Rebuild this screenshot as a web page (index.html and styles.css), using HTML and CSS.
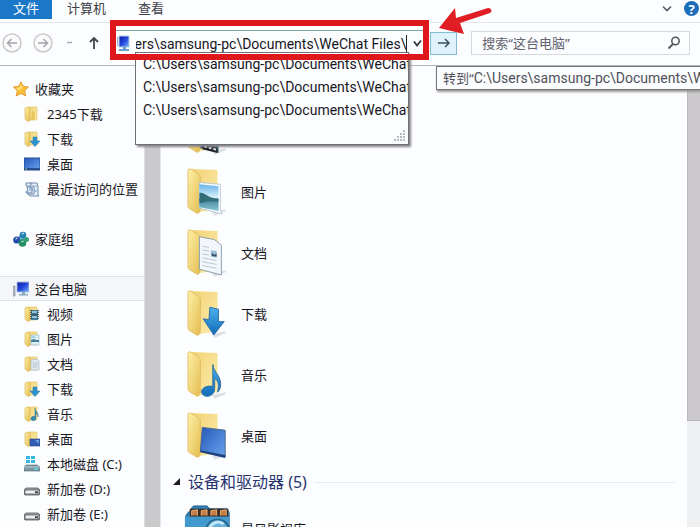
FILE: index.html
```html
<!DOCTYPE html>
<html lang="zh-CN">
<head>
<meta charset="utf-8">
<meta name="viewport" content="width=device-width, initial-scale=1">
<title>这台电脑</title>
<link rel="stylesheet" href="styles.css">
</head>
<body>
<svg class="sprite" aria-hidden="true">
  <defs>
    <linearGradient id="gold" x1="0" y1="0" x2="1" y2="1"><stop offset="0" stop-color="#fff0a8"/><stop offset="1" stop-color="#e3bd50"/></linearGradient>
    <linearGradient id="goldback" x1="0" y1="0" x2="1" y2="1"><stop offset="0" stop-color="#f2d375"/><stop offset="1" stop-color="#fbecac"/></linearGradient>
    <linearGradient id="blue" x1="0" y1="0" x2="1" y2="1"><stop offset="0" stop-color="#2458b8"/><stop offset="1" stop-color="#6ba4ee"/></linearGradient>
    <linearGradient id="arrowblue" x1="0" y1="0" x2="0" y2="1"><stop offset="0" stop-color="#4db0ec"/><stop offset="1" stop-color="#116bb8"/></linearGradient>
    <linearGradient id="sky" x1="0" y1="0" x2="0" y2="1"><stop offset="0" stop-color="#68b4e8"/><stop offset=".5" stop-color="#dcf1fa"/><stop offset=".55" stop-color="#44849a"/><stop offset="1" stop-color="#88c5d4"/></linearGradient>
    <linearGradient id="screen" x1="0" y1="0" x2="1" y2="1"><stop offset="0" stop-color="#0b18a0"/><stop offset=".5" stop-color="#2447dc"/><stop offset="1" stop-color="#7bb4fa"/></linearGradient>
  </defs>
  <symbol id="folder" viewBox="0 0 16 16">
    <path d="M4 1h9v13H4z" fill="url(#goldback)" stroke="#dfc067" stroke-width=".6"/>
    <path d="M1 2l2-1 3 1.500v12L4 15.500 1 13z" fill="url(#gold)" stroke="#d5b14c" stroke-width=".6"/>
  </symbol>
  <symbol id="s-folder" viewBox="0 0 16 16">
    <use href="#folder"/><path d="M8 4l3 3v7H7z" fill="#e8c75e"/>
  </symbol>
  <symbol id="s-download" viewBox="0 0 16 16">
    <use href="#folder"/><path d="M9 6h4v4h3l-5 5.500L6 10h3z" fill="#2e93cd" stroke="#2576a8" stroke-width=".5"/>
  </symbol>
  <symbol id="s-desktop" viewBox="0 0 16 16">
    <path d="M0 2h16v12H0z" fill="url(#blue)" stroke="#244c91"/><path d="M0 13h16" stroke="#1d3c78" stroke-width="1.500"/><path d="M1 13h2" stroke="#8bd0a0"/>
  </symbol>
  <symbol id="s-video" viewBox="0 0 16 16">
    <use href="#folder"/><path d="M7 4h7v10H7z" fill="#3c7d9d"/><path d="M7 4v10M14 4v10" stroke="#33414c" stroke-width="1.500" stroke-dasharray="1 1"/><path d="M8 6h5M8 11h5" stroke="#b8dae1" stroke-width="1.500"/><path d="M8 9h5" stroke="#23404e"/>
  </symbol>
  <symbol id="s-picture" viewBox="0 0 16 16">
    <use href="#folder"/><path d="M7 4h8v10H7z" fill="#d8eef6" stroke="#91b6c9" stroke-width=".6"/><path d="M7 9l3-1 2 1h3v2H7z" fill="#477c91"/><path d="M8 6h3" stroke="#6aadd5"/>
  </symbol>
  <symbol id="s-document" viewBox="0 0 16 16">
    <use href="#folder"/><path d="M7 4l6-1 2 2v9H7z" fill="#e4ebf0" stroke="#a2b2bd" stroke-width=".7"/><path d="M8.500 7h5M8.500 9h5M8.500 11h5" stroke="#9cb2c3" stroke-width=".7"/>
  </symbol>
  <symbol id="s-music" viewBox="0 0 16 16">
    <use href="#folder"/><path d="M11 2c0 4 4 4 3 9 0-3-1-4-2-4v5c0 4-6 3-5 0 1-2 3-2 4-1z" fill="#318fb5" stroke="#25617b" stroke-width=".4"/>
  </symbol>
  <symbol id="s-folderdesk" viewBox="0 0 16 16">
    <use href="#folder"/><path d="M6 8h10v7H6z" fill="#315fb5" stroke="#284180" stroke-width=".6"/><path d="M11 9h4v4" fill="#6e9ce0"/>
  </symbol>
  <symbol id="s-star" viewBox="0 0 16 16">
    <path d="M8 .8l2.300 4.500 5.200.7-3.800 3.700 1 5.300L8 12.500 3.300 15l1-5.300L.5 6l5.200-.7z" fill="#fdc034" stroke="#d68b20" stroke-width=".8"/><path d="M8 3l1.500 3.500L6 9 3 7l3.500-.6z" fill="#ffe47c"/>
  </symbol>
  <symbol id="s-recent" viewBox="0 0 16 16">
    <path d="M2 2h5v3H2zM6 2h7l1 3v9l1 1H6l-2-2h6V5H8M3 6h5v6H4z" fill="#e3effa" stroke="#738ba9"/><path d="M5 7h4M5 9h4M10 10h3M11 5h2" stroke="#6a9ac6"/><path d="M1 11l3-2v5z" fill="#7ba4cb"/>
  </symbol>
  <symbol id="s-home" viewBox="0 0 16 16">
    <path d="M8 4l4 5-8 2zM10 4l-1 9" stroke="#4d9ec6" stroke-width="2" fill="#9fd8df"/><circle cx="10" cy="4" r="3.300" fill="#247fb5"/><circle cx="3.800" cy="9" r="3.600" fill="#264aa8"/><circle cx="9.500" cy="12" r="3.800" fill="#258f61"/><circle cx="13.500" cy="8.500" r="2.500" fill="#359f73"/><path d="M9 3l2-1M2.500 8l2-1M8.500 11l2-1" stroke="#c9ecf2" stroke-width="1.300"/>
  </symbol>
  <symbol id="s-pc" viewBox="0 0 16 16">
    <path d="M0 5h2v10H0z" fill="#bac7cf" stroke="#73818d" stroke-width=".6"/><path d="M4 1h12v10H4z" fill="url(#screen)" stroke="#a1bddb"/><path d="M9 11h3v2h3v1.500H6V13h3z" fill="#8aa9bd"/>
  </symbol>
  <symbol id="s-system" viewBox="0 0 16 16">
    <path d="M2 0h4v3H2zM7 0h4v3H7zM2 4h4v3H2zM7 4h4v3H7z" fill="#35b7e4"/><path d="M2 9h11l3 2v4H0v-4z" fill="#7c97a2" stroke="#4c6774" stroke-width=".6"/><path d="M0 11h16" stroke="#bdd0d6"/><path d="M10 13h4" stroke="#63d2e2" stroke-width="1.500"/>
  </symbol>
  <symbol id="s-drive" viewBox="0 0 16 16">
    <path d="M2 7h12l2 2v4l-1 1H1l-1-1V9z" fill="#a3a6aa" stroke="#55585e" stroke-width=".8"/><path d="M1 9h14v4H1z" fill="#eef0f2" stroke="#54575d" stroke-width=".8"/><path d="M11 11.200h3" stroke="#40444a" stroke-width="1.800"/>
  </symbol>
  <symbol id="bigfolder" viewBox="0 0 44 52">
    <path d="M26 47l14-3 1 2-12 5z" fill="#c6cbd1" opacity=".6"/>
    <path d="M4 2l28 1v41l-18 3z" fill="url(#goldback)"/>
    <path d="M1 4c0-2 1-3 3-2l8 5c1 1 2 2 2 4v32c0 4-2 6-4 5l-8-5c-1-1-1-2-1-4z" fill="url(#gold)" stroke="#dab85c" stroke-width=".8"/>
  </symbol>
  <symbol id="b-video" viewBox="0 0 44 52">
    <use href="#bigfolder"/><path d="M14 15l19 3v31l-19-5z" fill="#2d6279"/><path d="M16 40l16 4v5l-16-4z" fill="#23272d"/><path d="M18 42l14 4" stroke="#e6e6e5" stroke-width="2" stroke-dasharray="3 2"/>
  </symbol>
  <symbol id="b-picture" viewBox="0 0 44 52">
    <use href="#bigfolder"/><path d="M13 16l22 2v27l2 4-24-6z" fill="#f8fcfe" stroke="#a5bed0" stroke-width=".8"/><path d="M13 18l20 2v26l-20-4z" fill="url(#sky)"/><path d="M13 27c5-2 9 6 20 6v3c-8-1-13 0-20 2z" fill="#326e78"/>
  </symbol>
  <symbol id="b-document" viewBox="0 0 44 52">
    <use href="#bigfolder"/><path d="M13 9l16 3 7 6v31l-23-6z" fill="#f3f6fa" stroke="#879db0"/><path d="M16 19l7 1M16 23l7 1M16 27l7 1M16 31l15 3M16 35l15 3M16 39l15 3" stroke="#b6c4d7"/><path d="M25 23l6 1v7l-6-1z" fill="#9dbfd7"/><path d="M26 26l3 2 2-2v4l-5-1z" fill="#334e65"/>
  </symbol>
  <symbol id="b-download" viewBox="0 0 44 52">
    <use href="#bigfolder"/><path d="M24 19l9 2v13l6 0-11 14-11-17 6 1z" fill="url(#arrowblue)" stroke="#2b70a6"/>
  </symbol>
  <symbol id="b-music" viewBox="0 0 44 52">
    <use href="#bigfolder"/><path d="M27 15c1 9 10 12 8 24-1 3-2 4-3 5 2-9 0-13-3-14v10c0 8-8 10-12 7-5-5 2-11 10-9z" fill="url(#arrowblue)" stroke="#2e6e9e"/>
  </symbol>
  <symbol id="b-desktop" viewBox="0 0 44 52">
    <use href="#bigfolder"/><path d="M16 17l24 3v28L14 42z" fill="url(#blue)" stroke="#48648d"/><path d="M14 41l26 5v3l-26-6z" fill="#1f427e"/>
  </symbol>
  <symbol id="b-media" viewBox="0 0 50 52">
    <path d="M2 12l3-4h3V4l2-2h14l3 3h18l2 4v43H1z" fill="#2c83ba" stroke="#225f89"/><path d="M6 5h40v9H6z" fill="#392b25"/><path d="M8 12V7l6-1v6M18 12V7l6-1v6M28 12V7l6-1v6M38 12V7l6-1v6" fill="#c47d48" stroke="#e8b174"/><path d="M1 13h46v39H1z" fill="#4299cd"/><circle cx="35" cy="28" r="12" fill="#68b2d9" stroke="#266991" stroke-width="2"/><path d="M27 24c3-5 10-7 14-3" fill="none" stroke="#c3e7f6" stroke-width="3"/>
  </symbol>
</svg>

<header class="ribbon">
  <button class="tab tab-file">文件</button>
  <button class="tab">计算机</button>
  <button class="tab">查看</button>
  <span class="spacer"></span>
  <button class="expand" aria-label="展开功能区"><svg width="10" height="8" viewBox="0 0 10 8"><path d="M1 1.500l4 4 4-4" fill="none" stroke="#555b66" stroke-width="1.600"/></svg></button>
  <button class="help" aria-label="帮助">?</button>
</header>

<div class="toolbar">
  <div class="history">
    <button aria-label="后退"><svg width="22" height="22" viewBox="0 0 22 22"><circle cx="11" cy="11" r="9" fill="#fbfbfc" stroke="#c9cace" stroke-width="1.500"/><path d="M16 11H7M10.500 7l-4 4 4 4" fill="none" stroke="#a3a5aa" stroke-width="1.500"/></svg></button>
    <button aria-label="前进"><svg width="22" height="22" viewBox="0 0 22 22"><circle cx="11" cy="11" r="9" fill="#fbfbfc" stroke="#c9cace" stroke-width="1.500"/><path d="M6 11h9M11.500 7l4 4-4 4" fill="none" stroke="#a3a5aa" stroke-width="1.500"/></svg></button>
  </div>
  <button class="recent" aria-label="最近浏览"><svg width="22" height="22" viewBox="0 0 22 22"><path d="M9 10.500h5" stroke="#aaacb2" stroke-width="1.500"/></svg></button>
  <button class="up" aria-label="向上"><svg width="20" height="22" viewBox="0 0 20 22"><path d="M10 17V6M6 10l4-4 4 4" fill="none" stroke="#44464e" stroke-width="1.800"/></svg></button>
  <div class="address">
    <div class="address-field">
      <svg width="18" height="18" viewBox="0 0 18 18"><path d="M1 2h1v9H1z" fill="#9eafc0"/><path d="M3 1h10v11H3z" fill="url(#screen)" stroke="#b0cdea"/><path d="M7 12h3v2h3v2H3v-2h4z" fill="#6b9fc9"/></svg>
      <input id="path" class="path" type="text" aria-label="地址" value="C:\Users\samsung-pc\Documents\WeChat Files\">
      <span class="caret"></span>
      <button class="drop" aria-label="显示历史记录"><svg width="10" height="10" viewBox="0 0 10 10"><path d="M1 2.500l3 4 4-5" fill="none" stroke="#33363e" stroke-width="1.800"/></svg></button>
    </div>
    <ul class="suggestions">
      <li>C:\Users\samsung-pc\Documents\WeChat</li>
      <li>C:\Users\samsung-pc\Documents\WeChat</li>
      <li>C:\Users\samsung-pc\Documents\WeChat</li>
      <li class="grip"><svg width="12" height="12" viewBox="0 0 12 12"><path d="M9 1h2M6 4h2M9 4h2M3 7h2M6 7h2M9 7h2M0 10h2M3 10h2M6 10h2M9 10h2" stroke="#b9bac0" stroke-width="2"/></svg></li>
    </ul>
    <div class="highlight"></div>
    <svg class="pointer" width="58" height="32" viewBox="0 0 58 32"><path d="M4 24L20 4l1 10L53 4c3 0 5 3 2 5L25 19l4 11z" fill="#df1d23"/></svg>
  </div>
  <button class="go" aria-label="转到"><svg width="14" height="12" viewBox="0 0 14 12"><path d="M1 6h11M8 2l4 4-4 4" fill="none" stroke="#3d505e" stroke-width="1.500"/></svg></button>
  <div class="search">
    <input type="search" aria-label="搜索" placeholder="搜索“这台电脑”">
    <svg width="14" height="14" viewBox="0 0 14 14"><circle cx="8.500" cy="5" r="3.700" fill="none" stroke="#50535c" stroke-width="1.500"/><path d="M6 8l-4.500 4.500" stroke="#50535c" stroke-width="1.800"/></svg>
  </div>
  <div class="tooltip" role="tooltip">转到“<span class="tip-path">C:\Users\samsung-pc\Documents\WeChat</span></div>
</div>

<div class="body">
  <nav class="sidebar">
    <section>
      <a class="root" href="#"><svg><use href="#s-star"/></svg>收藏夹</a>
      <a href="#"><svg><use href="#s-folder"/></svg>2345下载</a>
      <a href="#"><svg><use href="#s-download"/></svg>下载</a>
      <a href="#"><svg><use href="#s-desktop"/></svg>桌面</a>
      <a href="#"><svg><use href="#s-recent"/></svg>最近访问的位置</a>
    </section>
    <section>
      <a class="root" href="#"><svg><use href="#s-home"/></svg>家庭组</a>
    </section>
    <section>
      <a class="root current" href="#"><svg><use href="#s-pc"/></svg>这台电脑</a>
      <a href="#"><svg><use href="#s-video"/></svg>视频</a>
      <a href="#"><svg><use href="#s-picture"/></svg>图片</a>
      <a href="#"><svg><use href="#s-document"/></svg>文档</a>
      <a href="#"><svg><use href="#s-download"/></svg>下载</a>
      <a href="#"><svg><use href="#s-music"/></svg>音乐</a>
      <a href="#"><svg><use href="#s-folderdesk"/></svg>桌面</a>
      <a href="#"><svg><use href="#s-system"/></svg>本地磁盘 (C:)</a>
      <a href="#"><svg><use href="#s-drive"/></svg>新加卷 (D:)</a>
      <a href="#"><svg><use href="#s-drive"/></svg>新加卷 (E:)</a>
    </section>
  </nav>
  <div class="scrollbar scrollbar-left"></div>
  <main class="content">
    <a class="item" href="#" aria-label="视频"><svg><use href="#b-video"/></svg></a>
    <a class="item" href="#"><svg><use href="#b-picture"/></svg>图片</a>
    <a class="item" href="#"><svg><use href="#b-document"/></svg>文档</a>
    <a class="item" href="#"><svg><use href="#b-download"/></svg>下载</a>
    <a class="item" href="#"><svg><use href="#b-music"/></svg>音乐</a>
    <a class="item" href="#"><svg><use href="#b-desktop"/></svg>桌面</a>
    <h2 class="group"><svg width="8" height="8" viewBox="0 0 8 8"><path d="M7 0v7H0z" fill="#1c1c22"/></svg>设备和驱动器 (5)</h2>
    <a class="item media" href="#"><svg><use href="#b-media"/></svg>暴风影视库</a>
  </main>
  <div class="scrollbar scrollbar-right"><div class="thumb"></div></div>
</div>
<script>
  const path = document.getElementById('path');
  path.scrollLeft = path.scrollWidth;
</script>
</body>
</html>
```
FILE: styles.css
```css
* {
  box-sizing: border-box;
}

body {
  margin: 0;
  height: 100vh;
  display: flex;
  flex-direction: column;
  overflow: hidden;
  background: #fcfdfe;
  color: #17171f;
  font: 13px/20px "Noto Sans", "Noto Sans CJK SC", sans-serif;
}

button,
input {
  font: inherit;
  color: inherit;
  border: 0;
  padding: 0;
  background: none;
}

button {
  display: flex;
  align-items: center;
  justify-content: center;
}

input {
  outline: none;
  min-width: 0;
}

a {
  color: inherit;
  text-decoration: none;
}

svg {
  flex: none;
}

.sprite {
  position: absolute;
  width: 0;
  height: 0;
}

.ribbon {
  display: flex;
  flex: none;
  height: 23px;
  border-bottom: 1px solid #e2e5ea;
}

.tab {
  height: 16px;
  padding: 0 15px;
  color: #3e3f48;
}

.tab-file {
  width: 52px;
  padding: 0 0 3px;
  height: 19px;
  background: #1b78c9;
  color: #fff;
}

.tab:nth-child(3) {
  padding: 0 17px;
}

.spacer {
  flex: 1;
}

.expand {
  height: 18px;
  margin-right: 12px;
}

.help {
  width: 15px;
  height: 15px;
  margin: 1px 1px 0 0;
  border-radius: 50%;
  background: #1c6dba;
  color: #fff;
  font-weight: 700;
}

.toolbar {
  position: relative;
  z-index: 1;
  display: flex;
  flex: none;
  align-items: center;
  height: 43px;
  padding: 0 10px 2px 1px;
  border-bottom: 1px solid #b4b6ba;
}

.history {
  display: flex;
  gap: 9px;
  margin-right: 4px;
}

.up {
  margin: 0 6px 0 4px;
}

.address {
  position: relative;
  flex: 1 1 320px;
  min-width: 0;
}

.address,
.tip-path {
  font: 14px/20px Roboto, sans-serif;
}

.address-field {
  display: flex;
  align-items: center;
  height: 26px;
  margin: 0 6px;
  border-top: 1px solid #83a3b4;
}

.path {
  flex: 1;
  margin-left: 2px;
}

.caret {
  width: 1px;
  height: 18px;
  background: #222;
}

.drop {
  width: 16px;
  padding-left: 6px;
}

.suggestions {
  position: absolute;
  top: 22px;
  left: 25px;
  right: 20px;
  margin: 0;
  padding: 0 0 0 7px;
  border: 1px solid #6e7076;
  box-shadow: 2px 2px 2px #85868b;
  background: #fcfdfe;
  list-style: none;
  line-height: 23px;
  overflow: hidden;
  white-space: nowrap;
}

.grip {
  display: flex;
  justify-content: flex-end;
  align-items: flex-end;
  height: 22px;
  padding: 0 2px 2px 0;
}

.highlight {
  position: absolute;
  inset: -10px 0 -4px;
  border: 6px solid #df171c;
}

.pointer {
  position: absolute;
  left: 100%;
  bottom: 20px;
  margin-left: 6px;
}

.go {
  width: 27px;
  height: 23px;
  margin: 0 14px 0 1px;
  border: 1px solid #83b8ce;
  background: #dff1fa;
}

.search {
  display: flex;
  flex: 1 1 219px;
  align-items: center;
  min-width: 0;
  height: 24px;
  padding: 0 8px 0 10px;
  border: 1px solid #d5d8dd;
}

.search input {
  flex: 1;
}

.search input::placeholder {
  color: #62636e;
  opacity: 1;
}

.tooltip {
  position: absolute;
  top: 43px;
  left: 436px;
  right: 0;
  overflow: hidden;
  padding: 1px 6px;
  border: 1px solid #74757b;
  border-right: 0;
  box-shadow: 1px 2px 2px #999;
  background: #fcfdfe;
  color: #50505b;
  white-space: nowrap;
}

.body {
  display: flex;
  flex: 1;
  min-height: 0;
  overflow: hidden;
}

.sidebar {
  display: flex;
  flex: none;
  flex-direction: column;
  gap: 25px;
  width: 144px;
  padding-top: 10px;
}

.sidebar a {
  display: flex;
  align-items: center;
  gap: 7px;
  height: 25px;
  padding-left: 24px;
  white-space: nowrap;
}

.sidebar a.root {
  gap: 6px;
  padding-left: 13px;
}

.sidebar a.current {
  border: solid #e1e3e8;
  border-width: 1px 0;
  background: #f5f6f9;
}

.sidebar svg {
  width: 16px;
  height: 16px;
}

.scrollbar-left {
  flex: none;
  width: 16px;
  background: #cacacc;
  border-left: 1px solid #dedee0;
}

.content {
  flex: 1;
  min-width: 0;
  padding-top: 34px;
  border-left: 1px solid #e5e6e9;
}

.item {
  display: flex;
  align-items: center;
  gap: 12px;
  height: 61px;
  padding-left: 26px;
}

.item svg {
  width: 42px;
  height: 50px;
}

.group {
  display: flex;
  align-items: center;
  gap: 7px;
  margin: 0;
  padding: 0 12px;
  height: 32px;
  color: #27346f;
  font-size: 16px;
  font-weight: 400;
}

.group::after {
  content: "";
  flex: 1;
  height: 1px;
  background: #e8eaf0;
}

.media {
  padding-left: 22px;
  gap: 8px;
}

.media svg {
  width: 50px;
}

.scrollbar-right {
  flex: none;
  width: 13px;
  background: #eff0f1;
}

.thumb {
  height: 77%;
  background: #cbc9cb;
  border: solid #b9b9bb;
  border-width: 0 0 1px 1px;
}
```
